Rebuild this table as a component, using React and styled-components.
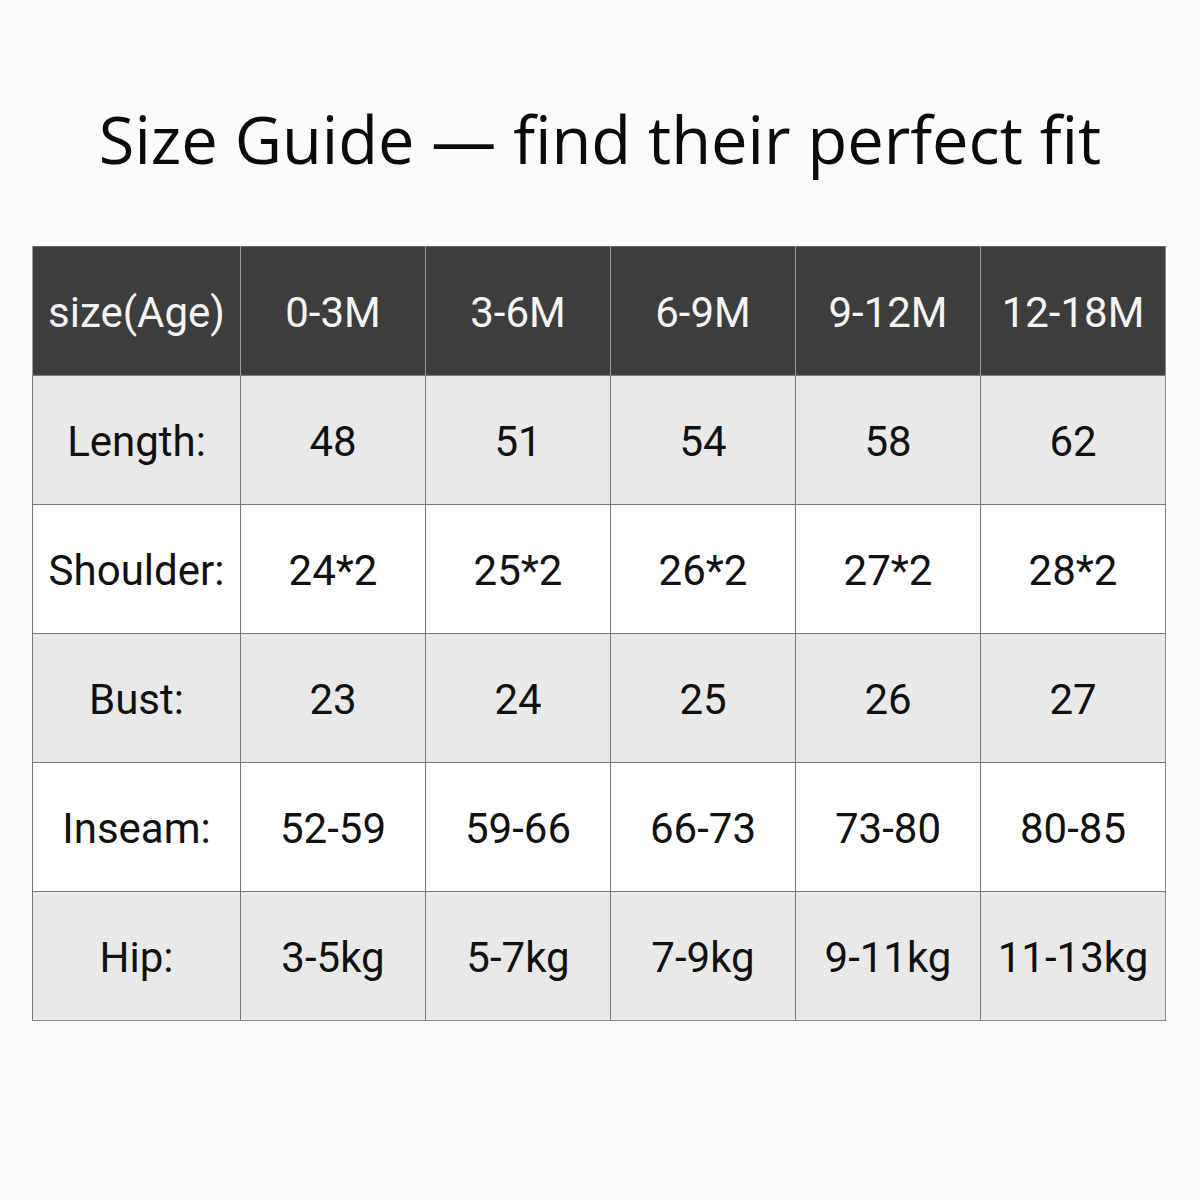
import React from 'react';
import styled, { createGlobalStyle } from 'styled-components';

const GlobalStyle = createGlobalStyle`
  html, body {
    margin: 0;
    padding: 0;
    background: #fbfbfb;
  }
`;

const Page = styled.div`
  width: 1200px;
  height: 1200px;
  box-sizing: border-box;
  padding-top: 94px;
  display: flex;
  flex-direction: column;
  align-items: center;
  background: #fbfbfb;
`;

const Title = styled.h1`
  margin: 0;
  font-family: "Open Sans", "Noto Sans", sans-serif;
  font-weight: 400;
  font-size: 65px;
  line-height: 90px;
  color: #0a0a0a;
`;

const Table = styled.div`
  margin-top: 62px;
  margin-left: 32px;
  align-self: flex-start;
  display: grid;
  grid-template-columns: 208px repeat(5, 185px);
  grid-auto-rows: 129px;
  border-right: 1px solid #888;
  border-bottom: 1px solid #888;
`;

const Cell = styled.div`
  display: flex;
  align-items: center;
  justify-content: center;
  border-left: 1px solid ${({ $head }) => ($head ? '#9a9a9a' : '#777')};
  border-top: 1px solid ${({ $head }) => ($head ? '#666' : '#777')};
  background: ${({ $head, $shade }) => ($head ? '#3d3d3d' : $shade ? '#e9e9e9' : '#ffffff')};
  color: ${({ $head }) => ($head ? '#f4f4f4' : '#111')};
  font-family: Roboto, "Noto Sans", sans-serif;
  font-size: 42px;
  white-space: nowrap;
  padding-top: 2px;
`;

const head = ['size(Age)', '0-3M', '3-6M', '6-9M', '9-12M', '12-18M'];
const rows = [
  ['Length:', '48', '51', '54', '58', '62'],
  ['Shoulder:', '24*2', '25*2', '26*2', '27*2', '28*2'],
  ['Bust:', '23', '24', '25', '26', '27'],
  ['Inseam:', '52-59', '59-66', '66-73', '73-80', '80-85'],
  ['Hip:', '3-5kg', '5-7kg', '7-9kg', '9-11kg', '11-13kg'],
];

export default function App() {
  return (
    <Page>
      <GlobalStyle />
      <Title>Size Guide — find their perfect fit</Title>
      <Table>
        {head.map((h) => (
          <Cell key={h} $head>{h}</Cell>
        ))}
        {rows.map((row, i) =>
          row.map((v, j) => (
            <Cell key={i + '-' + j} $shade={i % 2 === 0}>{v}</Cell>
          ))
        )}
      </Table>
    </Page>
  );
}
